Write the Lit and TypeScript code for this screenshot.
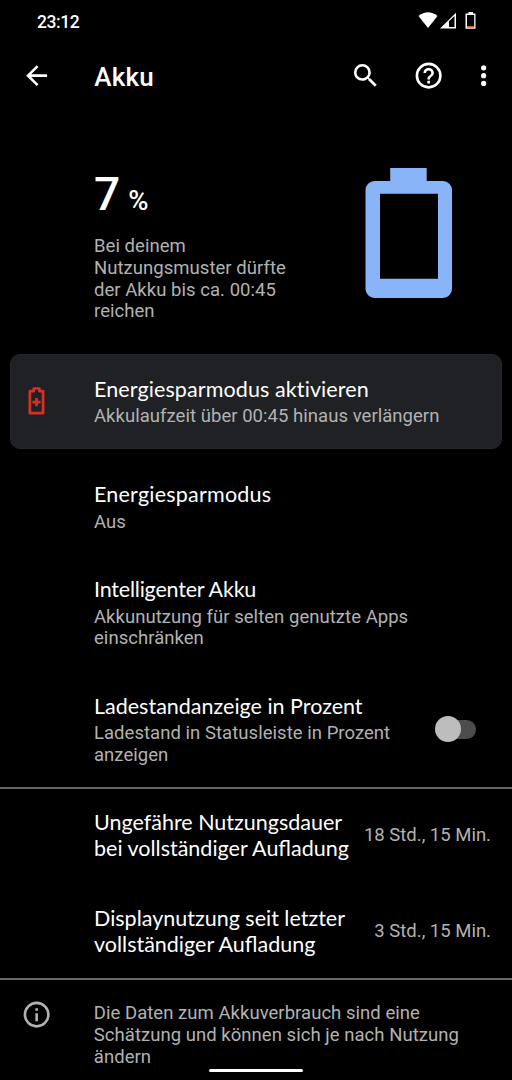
import { LitElement, html, css, svg, nothing } from "lit";
import { customElement, property } from "lit/decorators.js";

const icons = {
  back: svg`<path d="M20 11H7.83l5.59-5.59L12 4l-8 8 8 8 1.41-1.41L7.83 13H20z"/>`,
  search: svg`<path d="M15.5 14h-.79l-.28-.27A6.47 6.47 0 0 0 16 9.5 6.5 6.5 0 1 0 9.500 16c1.610 0 3.090-.59 4.230-1.570l.27.28v.79l5 4.990L20.490 19zm-6 0a4.500 4.500 0 1 1 0-9 4.500 4.500 0 0 1 0 9z"/>`,
  help: svg`<path d="M11 18h2v-2h-2zm1-16a10 10 0 1 0 0 20 10 10 0 0 0 0-20zm0 18a8 8 0 1 1 0-16 8 8 0 0 1 0 16zm0-14a4 4 0 0 0-4 4h2a2 2 0 1 1 4 0c0 2-3 1.750-3 5h2c0-2.250 3-2.500 3-5a4 4 0 0 0-4-4z"/>`,
  more: svg`<circle cx="12" cy="6" r="2"/><circle cx="12" cy="12" r="2"/><circle cx="12" cy="18" r="2"/>`,
  info: svg`<path d="M11 7h2v2h-2zm0 4h2v6h-2zm1-9a10 10 0 1 0 0 20 10 10 0 0 0 0-20zm0 18a8 8 0 1 1 0-16 8 8 0 0 1 0 16z"/>`,
};

@customElement("battery-row")
class BatteryRow extends LitElement {
  @property({ attribute: false }) heading: string[] = [];
  @property({ attribute: false }) summary: string[] = [];
  @property() value = "";

  static styles = css`
    :host { display: flex; align-items: center; padding: 21.5px 21px 21.5px 94px; }
    :host([value]) { padding-top: 22.2px; }
    .copy { flex: 1; min-width: 0; white-space: nowrap; }
    .title { color: #fff; font: 400 21.5px/26px Lato, sans-serif; letter-spacing: var(--title-tracking, normal); }
    .summary { margin: 4.5px 0 -0.5px; color: #b2b2b2; font: 400 18.5px/21.75px Roboto, sans-serif; letter-spacing: 0.04px; }
    .line { display: block; }
    .value { padding-top: 2px; color: #b2b2b2; font: 400 18.5px/21.75px Roboto, sans-serif; white-space: nowrap; }
  `;

  render() {
    return html`
      <slot name="icon"></slot>
      <div class="copy">
        <div class="title">${this.heading.map((l) => html`<span class="line">${l}</span>`)}</div>
        ${this.summary.length
          ? html`<div class="summary">${this.summary.map((l) => html`<span class="line">${l}</span>`)}</div>`
          : nothing}
      </div>
      ${this.value ? html`<span class="value">${this.value}</span>` : nothing}
      <slot name="control"></slot>
    `;
  }
}

@customElement("app-root")
class AppRoot extends LitElement {
  static styles = css`
    :host { display: block; height: 1080px; overflow: hidden; position: relative; background: #000; color: #fff; font-family: Roboto, sans-serif; }
    svg { display: block; fill: currentColor; }
    .status { display: flex; align-items: center; height: 42px; padding: 0 35px 0 37px; }
    .clock { flex: 1; padding-top: 1px; font: 500 17.5px/24px Roboto, sans-serif; letter-spacing: -0.45px; }
    .bar { display: flex; align-items: center; height: 68px; padding: 0 13px 0 21px; }
    .bar h1 { flex: 1; margin: 2px 0 0 42px; font: 500 26px/32px Roboto, sans-serif; letter-spacing: 0.2px; }
    .search { margin-right: 31.5px; }
    .help { margin-right: 23.500px; }
    .hero { display: flex; justify-content: space-between; height: 186px; padding: 58px 60px 0 94px; }
    .level { display: flex; align-items: baseline; height: 58px; font: 500 46px/52px Roboto, sans-serif; }
    .percent { margin-left: 8px; font: 500 27.5px/30px Roboto, sans-serif; }
    .estimate { margin-top: 10px; color: #b2b2b2; font: 400 18.5px/21.75px Roboto, sans-serif; letter-spacing: 0.04px; white-space: nowrap; }
    .card { margin: 0 10px 10.8px; border: 1px solid #25272a; box-sizing: border-box; height: 95px; border-radius: 10px; background: #202124; padding: 20.65px 10px 20.65px 15px; }
    .saver { width: 68px; color: #d93025; margin-top: -2px; }
    .tight { --title-tracking: -0.2px; }
    .slim { --title-tracking: 0.1px; }
    .loose { --title-tracking: 0.22px; }
    .switch { display: flex; align-items: center; width: 42px; height: 27px; margin-right: 14px; }
    .track { width: 36px; height: 19px; margin-left: 5px; border-radius: 10px; background: #4d4d4d; }
    .thumb { width: 26px; height: 26px; margin-left: -41px; border-radius: 50%; background: #bdbdbd; }
    .divider { height: 2px; margin-bottom: -2px; background: #666; }
    .divider.first { margin-top: -0.7px; }
    .footer { display: flex; padding: 24px 20px 0 20.500px; color: #b2b2b2; }
    .footer p { margin: 1px 0 0 42px; font: 400 18.5px/21.75px Roboto, sans-serif; letter-spacing: 0.04px; white-space: nowrap; }
    .footer svg { margin-top: -3.500px; }
    .home { position: absolute; left: 209px; top: 1069px; width: 94px; height: 3px; border-radius: 2px; background: #fff; }
  `;

  private icon(name: keyof typeof icons, size = 31.3, cls = "") {
    return html`<svg class=${cls} width=${size} height=${size} viewBox="0 0 24 24">${icons[name]}</svg>`;
  }

  render() {
    return html`
      <div class="status">
        <span class="clock">23:12</span>
        <svg width="59" height="20" viewBox="0 0 59 20">
          <path d="M.5 5Q10-2.500 19.500 5L10 17z" />
          <path d="M22 17.500L38 1.700v15.800zM31 10.300V16h5.500V5z" fill-rule="evenodd" />
          <path d="M48 2.500h2.500V1h4.500v1.500h2.500V17.800H47.500V2.500zM49 4v12.300h7.200V4z" fill-rule="evenodd" />
          <path d="M49 14.900h7.200v1.400h-7.200z" fill="#f4511e" />
        </svg>
      </div>
      <header class="bar">
        ${this.icon("back")}
        <h1>Akku</h1>
        ${this.icon("search", 31.3, "search")} ${this.icon("help", 31.3, "help")} ${this.icon("more")}
      </header>
      <section class="hero">
        <div>
          <div class="level">7<span class="percent">%</span></div>
          <div class="estimate">Bei deinem<br />Nutzungsmuster dürfte<br />der Akku bis ca. 00:45<br />reichen</div>
        </div>
        <svg width="87" height="131" viewBox="0 0 87 131">
          <path fill="#8ab4f8" fill-rule="evenodd" d="M25.200 0H61.700v13H78a9 9 0 0 1 9 9v99a9 9 0 0 1-9 9H9.500a9 9 0 0 1-9-9V22a9 9 0 0 1 9-9H25.200zM15 25.700v85h58v-85z" />
        </svg>
      </section>
      <battery-row class="card slim" .heading=${["Energiesparmodus aktivieren"]} .summary=${["Akkulaufzeit über 00:45 hinaus verlängern"]}>
        <svg slot="icon" class="saver" width="68" height="28" viewBox="0 0 68 28">
          <path d="M7.200 1.500h5.600v2.700h3.700v22H3.300v-22h3.900z" transform="translate(.6 0)" fill="none" stroke="currentColor" stroke-width="2.700" stroke-linejoin="round" />
          <path d="M9.200 11h2.700v2.800h2.700v2.600h-2.700v2.800H9.200v-2.800H6.400v-2.600h2.800z" />
        </svg>
      </battery-row>
      <battery-row class="loose" .heading=${["Energiesparmodus"]} .summary=${["Aus"]}></battery-row>
      <battery-row class="tight" .heading=${["Intelligenter Akku"]} .summary=${["Akkunutzung für selten genutzte Apps", "einschränken"]}></battery-row>
      <battery-row .heading=${["Ladestandanzeige in Prozent"]} .summary=${["Ladestand in Statusleiste in Prozent", "anzeigen"]}>
        <div slot="control" class="switch"><div class="track"></div><div class="thumb"></div></div>
      </battery-row>
      <div class="divider first"></div>
      <battery-row .heading=${["Ungefähre Nutzungsdauer", "bei vollständiger Aufladung"]} value="18 Std., 15 Min."></battery-row>
      <battery-row .heading=${["Displaynutzung seit letzter", "vollständiger Aufladung"]} value="3 Std., 15 Min."></battery-row>
      <div class="divider"></div>
      <footer class="footer">
        ${this.icon("info")}
        <p>Die Daten zum Akkuverbrauch sind eine<br />Schätzung und können sich je nach Nutzung<br />ändern</p>
      </footer>
      <div class="home"></div>
    `;
  }
}
